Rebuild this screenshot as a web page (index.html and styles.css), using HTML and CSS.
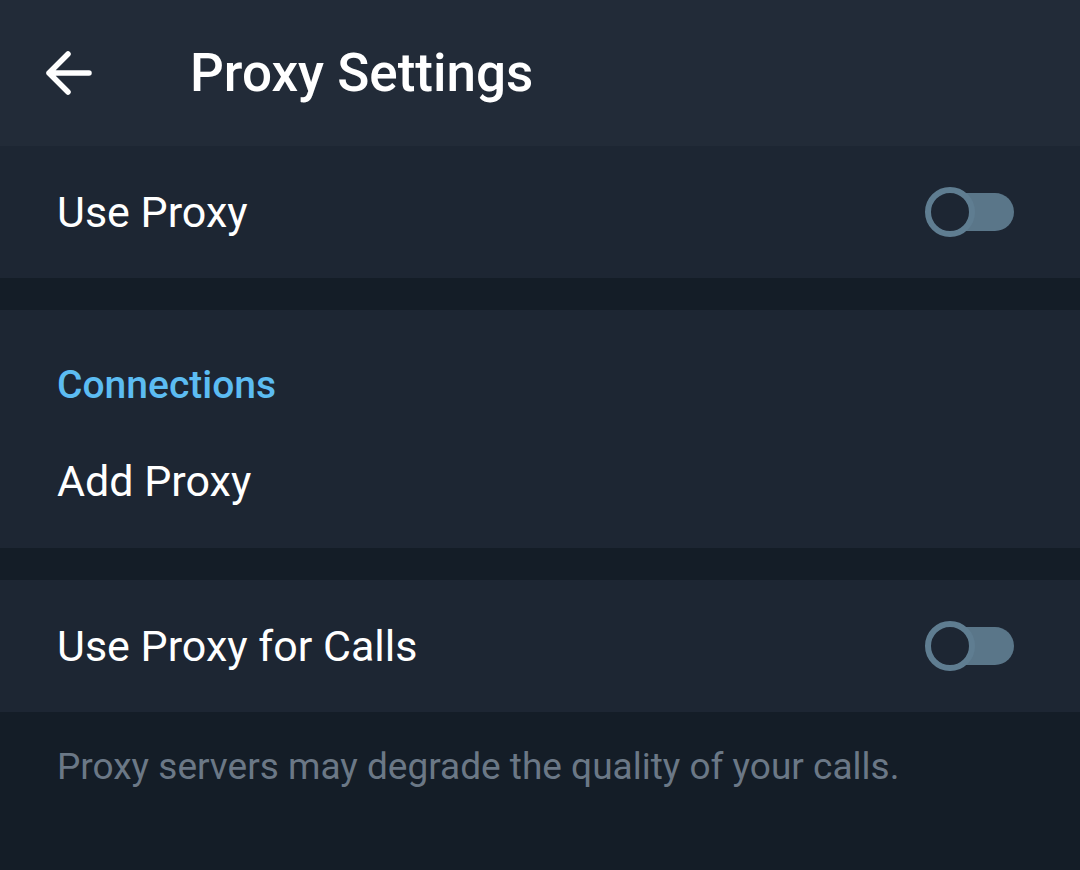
FILE: index.html
```html
<!DOCTYPE html>
<html>
<head>
<meta charset="utf-8">
<link rel="stylesheet" href="styles.css">
</head>
<body>
<div class="screen">
  <header class="topbar">
    <div class="back">
      <svg width="52" height="52" viewBox="0 0 52 52">
        <path d="M5 26 H45 M5 26 L24 7 M5 26 L24 45" fill="none" stroke="#ffffff" stroke-width="5.5" stroke-linecap="round" stroke-linejoin="round"/>
      </svg>
    </div>
    <h1 class="title">Proxy Settings</h1>
  </header>

  <section class="group">
    <div class="row">
      <span class="label">Use Proxy</span>
      <span class="switch"><span class="knob"></span></span>
    </div>
  </section>

  <div class="gap"></div>

  <section class="group">
    <div class="heading">Connections</div>
    <div class="row row-add">
      <span class="label">Add Proxy</span>
    </div>
  </section>

  <div class="gap"></div>

  <section class="group">
    <div class="row">
      <span class="label">Use Proxy for Calls</span>
      <span class="switch"><span class="knob"></span></span>
    </div>
  </section>

  <footer class="note">Proxy servers may degrade the quality of your calls.</footer>
</div>
</body>
</html>
```

FILE: styles.css
```css
html, body {
  margin: 0;
  padding: 0;
  background: #141d27;
}
.screen {
  width: 1080px;
  height: 870px;
  display: flex;
  flex-direction: column;
  font-family: Roboto, "Noto Sans", sans-serif;
  background: #141d27;
  overflow: hidden;
}
.topbar {
  height: 146px;
  background: #222b38;
  display: flex;
  align-items: center;
  flex-shrink: 0;
}
.back {
  width: 52px;
  height: 52px;
  margin-left: 44px;
  display: flex;
}
.title {
  margin: 0 0 0 94px;
  color: #ffffff;
  font-size: 53px;
  font-weight: 500;
  line-height: 60px;
}
.group {
  background: #1d2633;
}
.row {
  height: 132px;
  padding: 0 66px 0 57px;
  display: flex;
  align-items: center;
  justify-content: space-between;
}
.row-add {
  height: 134px;
}
.label {
  color: #ffffff;
  font-size: 43px;
  line-height: 50px;
}
.heading {
  color: #5cbcf2;
  font-size: 39px;
  font-weight: 500;
  line-height: 40px;
  padding: 55px 57px 9px;
}
.gap {
  height: 32px;
  background: #141d27;
}
.switch {
  position: relative;
  width: 88px;
  height: 38px;
  border-radius: 19px;
  background: #5a7689;
}
.knob {
  position: absolute;
  left: -1px;
  top: -6px;
  width: 38px;
  height: 38px;
  border-radius: 50%;
  background: #1d2633;
  border: 6px solid #5f7d91;
}
.note {
  flex: 1;
  background: #141d27;
  color: #6b7886;
  font-size: 37px;
  line-height: 38px;
  padding: 36px 57px 0;
}
```
